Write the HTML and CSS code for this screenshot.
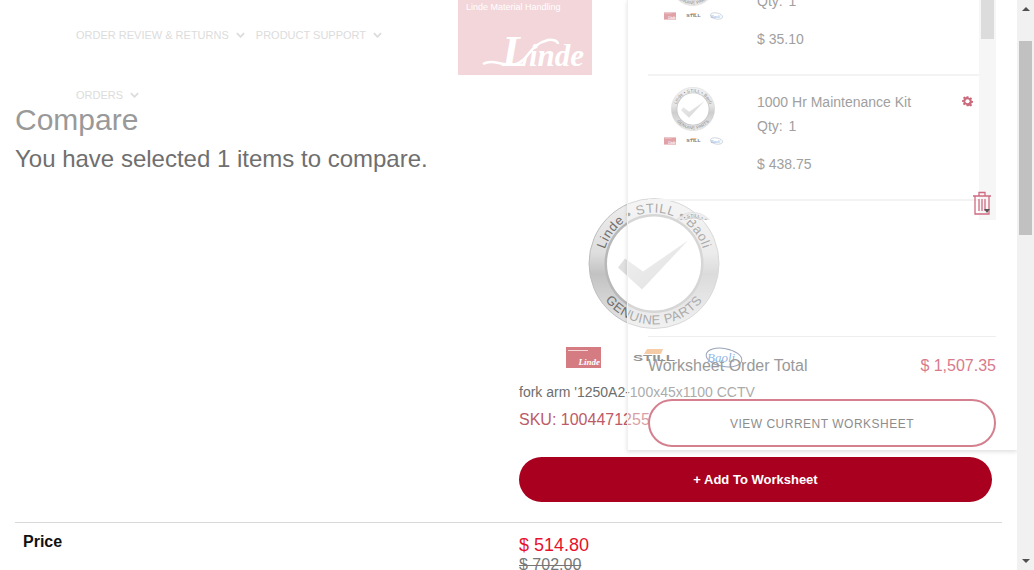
FILE: index.html
```html
<!DOCTYPE html>
<html lang="en">
<head>
<meta charset="utf-8">
<title>Compare</title>
<link rel="stylesheet" href="styles.css">
</head>
<body>
<svg class="defs" width="0" height="0" aria-hidden="true">
  <defs>
    <linearGradient id="ringFill" x1="0" y1="0" x2="0" y2="1">
      <stop offset="0" stop-color="#eeeeee"/>
      <stop offset=".42" stop-color="#dedede"/>
      <stop offset=".58" stop-color="#c2c2c2"/>
      <stop offset="1" stop-color="#e8e8e8"/>
    </linearGradient>
    <linearGradient id="checkFill" x1="0" y1="0" x2="1" y2="1">
      <stop offset="0" stop-color="#e8e8e8"/>
      <stop offset="1" stop-color="#cbcbcb"/>
    </linearGradient>
    <path id="arcTop" d="M15 66 A51 51 0 0 1 117 66"/>
    <path id="arcBottom" d="M5 66 A61 61 0 0 0 127 66"/>
    <symbol id="badge" viewBox="0 0 132 132">
      <circle cx="66" cy="66" r="65" fill="url(#ringFill)" stroke="#bdbdbd"/>
      <circle cx="66" cy="66" r="49.500" fill="#b8b8b8"/>
      <circle cx="66" cy="66" r="47" fill="#fff"/>
      <polygon points="37,61 55,74 100,43 54,92 30,70" fill="url(#checkFill)"/>
      <text class="badge-text"><textPath href="#arcTop" startOffset="50%" text-anchor="middle">Linde • STILL • Baoli</textPath></text>
      <text class="badge-text"><textPath href="#arcBottom" startOffset="50%" text-anchor="middle">GENUINE PARTS</textPath></text>
    </symbol>
    <symbol id="brand-linde" viewBox="0 0 35 21">
      <rect width="35" height="21" fill="#d57c82"/>
      <rect x="2" y="3" width="20" height="1" fill="#f2d5d7"/>
      <text x="34" y="18" text-anchor="end" class="brand-linde-text">Linde</text>
    </symbol>
    <symbol id="brand-still" viewBox="0 0 44 21">
      <polygon points="15,2 31,2 29,7 12,7" fill="#f0a868"/>
      <text x="1" y="14" class="brand-still-text" textLength="42" lengthAdjust="spacingAndGlyphs">STILL</text>
    </symbol>
    <symbol id="brand-baoli" viewBox="0 0 38 21">
      <ellipse cx="19" cy="10.500" rx="18" ry="9" fill="none" stroke="#4f6288" transform="rotate(10 19 10.500)"/>
      <text x="2" y="15" class="brand-baoli-text">Baoli</text>
    </symbol>
  </defs>
</svg>

<div class="page">
  <header class="site-header">
    <nav class="nav">
      <a class="nav-item">ORDER REVIEW &amp; RETURNS <svg class="chev" viewBox="0 0 10 6"><path d="M1 1l4 4 4-4"/></svg></a>
      <a class="nav-item">PRODUCT SUPPORT <svg class="chev" viewBox="0 0 10 6"><path d="M1 1l4 4 4-4"/></svg></a>
      <a class="nav-item">ORDERS <svg class="chev" viewBox="0 0 10 6"><path d="M1 1l4 4 4-4"/></svg></a>
    </nav>
    <svg class="logo" viewBox="0 0 134 75">
      <text x="8" y="10" class="logo-caption">Linde Material Handling</text>
      <path class="logo-swoosh" d="M25 64 C35 58 45 67 58 64 C72 60 70 45 90 40 C95 39 100 41 100 44"/>
      <text x="44" y="66" class="logo-mark"><tspan class="logo-mark-l">L</tspan>inde</text>
    </svg>
  </header>

  <main class="compare">
    <h1 class="title">Compare</h1>
    <p class="subtitle">You have selected 1 items to compare.</p>

    <section class="product-row">
      <div class="product">
        <svg class="hero-badge"><use href="#badge"/></svg>
        <div class="brands">
          <svg class="brand-a"><use href="#brand-linde"/></svg>
          <svg class="brand-b"><use href="#brand-still"/></svg>
          <svg class="brand-c"><use href="#brand-baoli"/></svg>
        </div>
        <p class="product-name">fork arm '1250A2-100x45x1100 CCTV</p>
        <p class="product-sku">SKU: 1004471255</p>
        <button class="add-btn">+ Add To Worksheet</button>
      </div>
    </section>

    <section class="price-row">
      <div class="price-label">Price</div>
      <div class="price-values">
        <div class="price-now">$ 514.80</div>
        <div class="price-was">$ 702.00</div>
      </div>
    </section>
  </main>

  <aside class="worksheet">
    <div class="ws-scroll">
      <ul class="ws-list">
        <li class="ws-item">
          <div class="ws-thumb">
            <svg class="ws-badge"><use href="#badge"/></svg>
            <div class="ws-brands">
              <svg class="mini-a"><use href="#brand-linde"/></svg>
              <svg class="mini-b"><use href="#brand-still"/></svg>
              <svg class="mini-c"><use href="#brand-baoli"/></svg>
            </div>
          </div>
          <div class="ws-info">
            <div class="ws-name">&nbsp;</div>
            <div class="ws-qty">Qty: <span class="ws-qty-n">1</span></div>
            <div class="ws-price">$ 35.10</div>
          </div>
        </li>
        <li class="ws-item">
          <div class="ws-thumb">
            <svg class="ws-badge"><use href="#badge"/></svg>
            <div class="ws-brands">
              <svg class="mini-a"><use href="#brand-linde"/></svg>
              <svg class="mini-b"><use href="#brand-still"/></svg>
              <svg class="mini-c"><use href="#brand-baoli"/></svg>
            </div>
          </div>
          <div class="ws-info">
            <div class="ws-name">1000 Hr Maintenance Kit</div>
            <div class="ws-qty">Qty: <span class="ws-qty-n">1</span></div>
            <div class="ws-price">$ 438.75</div>
          </div>
          <svg class="gear" viewBox="0 0 24 24"><path d="M10 1h4l.6 3.200 2 .8 2.700-1.800 2.800 2.800-1.800 2.700.8 2 3.200.6v4l-3.200.6-.8 2 1.800 2.700-2.800 2.800-2.700-1.800-2 .8L14 23h-4l-.6-3.200-2-.8-2.700 1.800-2.800-2.800 1.800-2.700-.8-2L0 13.700v-4l3.200-.6.8-2-1.800-2.700L5 1.600l2.700 1.800 2-.8z" transform="translate(0 -.5)"/><circle cx="12" cy="11.500" r="4.500" fill="#fff"/></svg>
        </li>
        <li class="ws-item">
          <div class="ws-thumb">
            <svg class="ws-badge"><use href="#badge"/></svg>
          </div>
        </li>
      </ul>
      <div class="ws-scrollbar"><div class="ws-scrollbar-thumb"></div></div>
    </div>
    <svg class="trash" viewBox="0 0 20 24">
      <path d="M1 5h18M7 5V1.500h6V5M3 5v18h14V5M7 8v12M10 8v12M13 8v12"/>
    </svg>
    <span class="ws-arrow"></span>
    <div class="ws-footer">
      <div class="ws-total">
        <span class="ws-total-label">Worksheet Order Total</span>
        <span class="ws-total-value">$ 1,507.35</span>
      </div>
      <a class="ws-view">VIEW CURRENT WORKSHEET</a>
    </div>
  </aside>
</div>

<div class="scrollbar">
  <span class="arrow-up"></span>
  <div class="scrollbar-thumb"></div>
  <span class="arrow-down"></span>
</div>
</body>
</html>
```
FILE: styles.css
```css
* { box-sizing: border-box; }
html, body { margin: 0; height: 570px; overflow: hidden; background: #fff; }
body { display: flex; font-family: "Liberation Sans", Arial, sans-serif; color: #666; }
.defs { position: absolute; }
.page { position: relative; flex: 1; height: 570px; overflow: hidden; }

/* header */
.site-header { display: flex; height: 103px; padding-left: 76px; }
.nav { display: flex; flex-wrap: wrap; align-content: flex-start; width: 382px; height: 125px; padding-top: 5px; }
.nav-item { display: flex; align-items: center; gap: 7px; height: 60px; margin-right: 11px; font-size: 11px; color: #dcdcdc; white-space: nowrap; }
.chev { width: 9px; height: 6px; fill: none; stroke: #dcdcdc; stroke-width: 2; }
.logo { flex: none; width: 134px; height: 75px; background: #f3d6da; }
.logo-caption { font-size: 9px; fill: #fff; }
.logo-swoosh { fill: none; stroke: #fff; stroke-width: 2.500; }
.logo-mark { font: italic bold 31px "Liberation Serif", serif; fill: #fff; }
.logo-mark-l { font-size: 44px; }

/* main */
.compare { padding: 0 15px; }
.title { margin: 0; font-size: 30px; line-height: 33px; font-weight: 400; color: #999; }
.subtitle { margin: 10px 0 0; font-size: 24px; line-height: 26px; color: #6f6f6f; }
.product-row { display: flex; padding-left: 504px; margin-top: 25px; }
.product { width: 473px; }
.hero-badge { display: block; width: 132px; height: 133px; margin-left: 69px; }
.badge-text { font-size: 13px; letter-spacing: .6px; fill: #6e6e6e; }
.brands { display: flex; margin: 17px 0 0 47px; height: 21px; }
.brand-a { width: 35px; height: 21px; }
.brand-b { width: 44px; height: 21px; margin-left: 31px; }
.brand-c { width: 38px; height: 21px; margin-left: 29px; }
.brand-linde-text { font: italic bold 9px "Liberation Serif", serif; fill: #fff; }
.brand-still-text { font: bold 8.500px "Liberation Sans", sans-serif; fill: #444; }
.brand-baoli-text { font: italic 13px "Liberation Serif", serif; fill: #3f7fd0; }
.product-name { margin: 14px 0 0; font-size: 14px; line-height: 20px; color: #6e6e6e; }
.product-sku { margin: 7px 0 0; font-size: 16px; line-height: 22px; color: #bd5a68; }
.add-btn { display: block; width: 473px; height: 45px; margin-top: 26px; border: 0; border-radius: 23px; background: #a8001e; color: #fff; font: bold 13px "Liberation Sans", sans-serif; }
.price-row { display: flex; margin-top: 20px; border-top: 1px solid #d8d8d8; width: 987px; }
.price-label { width: 504px; padding: 9px 8px; font-size: 16px; line-height: 19px; font-weight: 700; color: #111; }
.price-values { padding-top: 12px; }
.price-now { font-size: 18px; line-height: 20px; color: #e8112d; }
.price-was { font-size: 16px; line-height: 20px; color: #777; text-decoration: line-through; }

/* worksheet flyout */
.worksheet { position: absolute; left: 627px; top: 0; width: 390px; height: 450px; background: rgba(255, 255, 255, .42); border-left: 1px solid #f0f0f0; box-shadow: 0 2px 4px rgba(0, 0, 0, .12); color: #a0a0a0; font-size: 14px; }
.ws-scroll { position: relative; display: flex; height: 220px; overflow: hidden; padding-left: 20px; }
.ws-list { list-style: none; margin: -49px 0 0; padding: 0; width: 331px; }
.ws-item { position: relative; display: flex; height: 125px; padding-top: 14px; border-bottom: 2px solid #f3f3f3; }
.ws-thumb { width: 109px; }
.ws-badge { display: block; width: 44px; height: 44px; margin: -3px 0 0 23px; opacity: .8; }
.ws-brands { display: flex; align-items: center; height: 10px; margin-top: 5px; padding-left: 16px; opacity: .7; }
.mini-a { width: 12px; height: 8px; }
.mini-b { width: 15px; height: 8px; margin-left: 10px; }
.mini-c { width: 13px; height: 8px; margin-left: 9px; }
.ws-info { padding-top: 2px; }
.ws-name { line-height: 20px; }
.ws-qty { margin-top: 4px; line-height: 20px; }
.ws-qty-n { margin-left: 2px; }
.ws-price { margin-top: 18px; line-height: 20px; }
.gear { position: absolute; left: 314px; top: 20px; width: 11px; height: 11px; fill: #cc6a7e; }
.ws-scrollbar { width: 17px; height: 220px; padding: 0 2px; background: #f6f6f6; }
.ws-scrollbar-thumb { height: 39px; background: #dcdcdc; }
.trash { position: absolute; left: 344px; top: 191px; width: 20px; height: 24px; fill: none; stroke: #d06a80; stroke-width: 1.300; }
.ws-arrow { position: absolute; left: 356px; top: 209px; border: 3px solid transparent; border-top: 4px solid #555; border-bottom: 0; }
.ws-footer { margin: 116px 21px 0 20px; }
.ws-total { display: flex; justify-content: space-between; align-items: center; height: 58px; border-top: 1px solid #eeeeee; font-size: 16px; color: #999; }
.ws-total-value { color: #d97a8c; }
.ws-view { display: flex; align-items: center; justify-content: center; height: 48px; margin-top: 5px; padding-top: 1px; border: 2px solid #d4808e; border-radius: 24px; background: #fff; font-size: 12px; letter-spacing: .5px; color: #8d8d8d; }

/* window scrollbar */
.scrollbar { position: relative; flex: none; width: 17px; height: 570px; padding-top: 41px; background: #f1f1f1; }
.scrollbar-thumb { width: 13px; height: 194px; margin-left: 2px; background: #c1c1c1; }
.arrow-up { position: absolute; left: 5px; top: 7px; border: 4px solid transparent; border-bottom: 4px solid #505050; border-top: 0; }
.arrow-down { position: absolute; left: 5px; top: 559px; border: 4px solid transparent; border-top: 4px solid #505050; border-bottom: 0; }
```
